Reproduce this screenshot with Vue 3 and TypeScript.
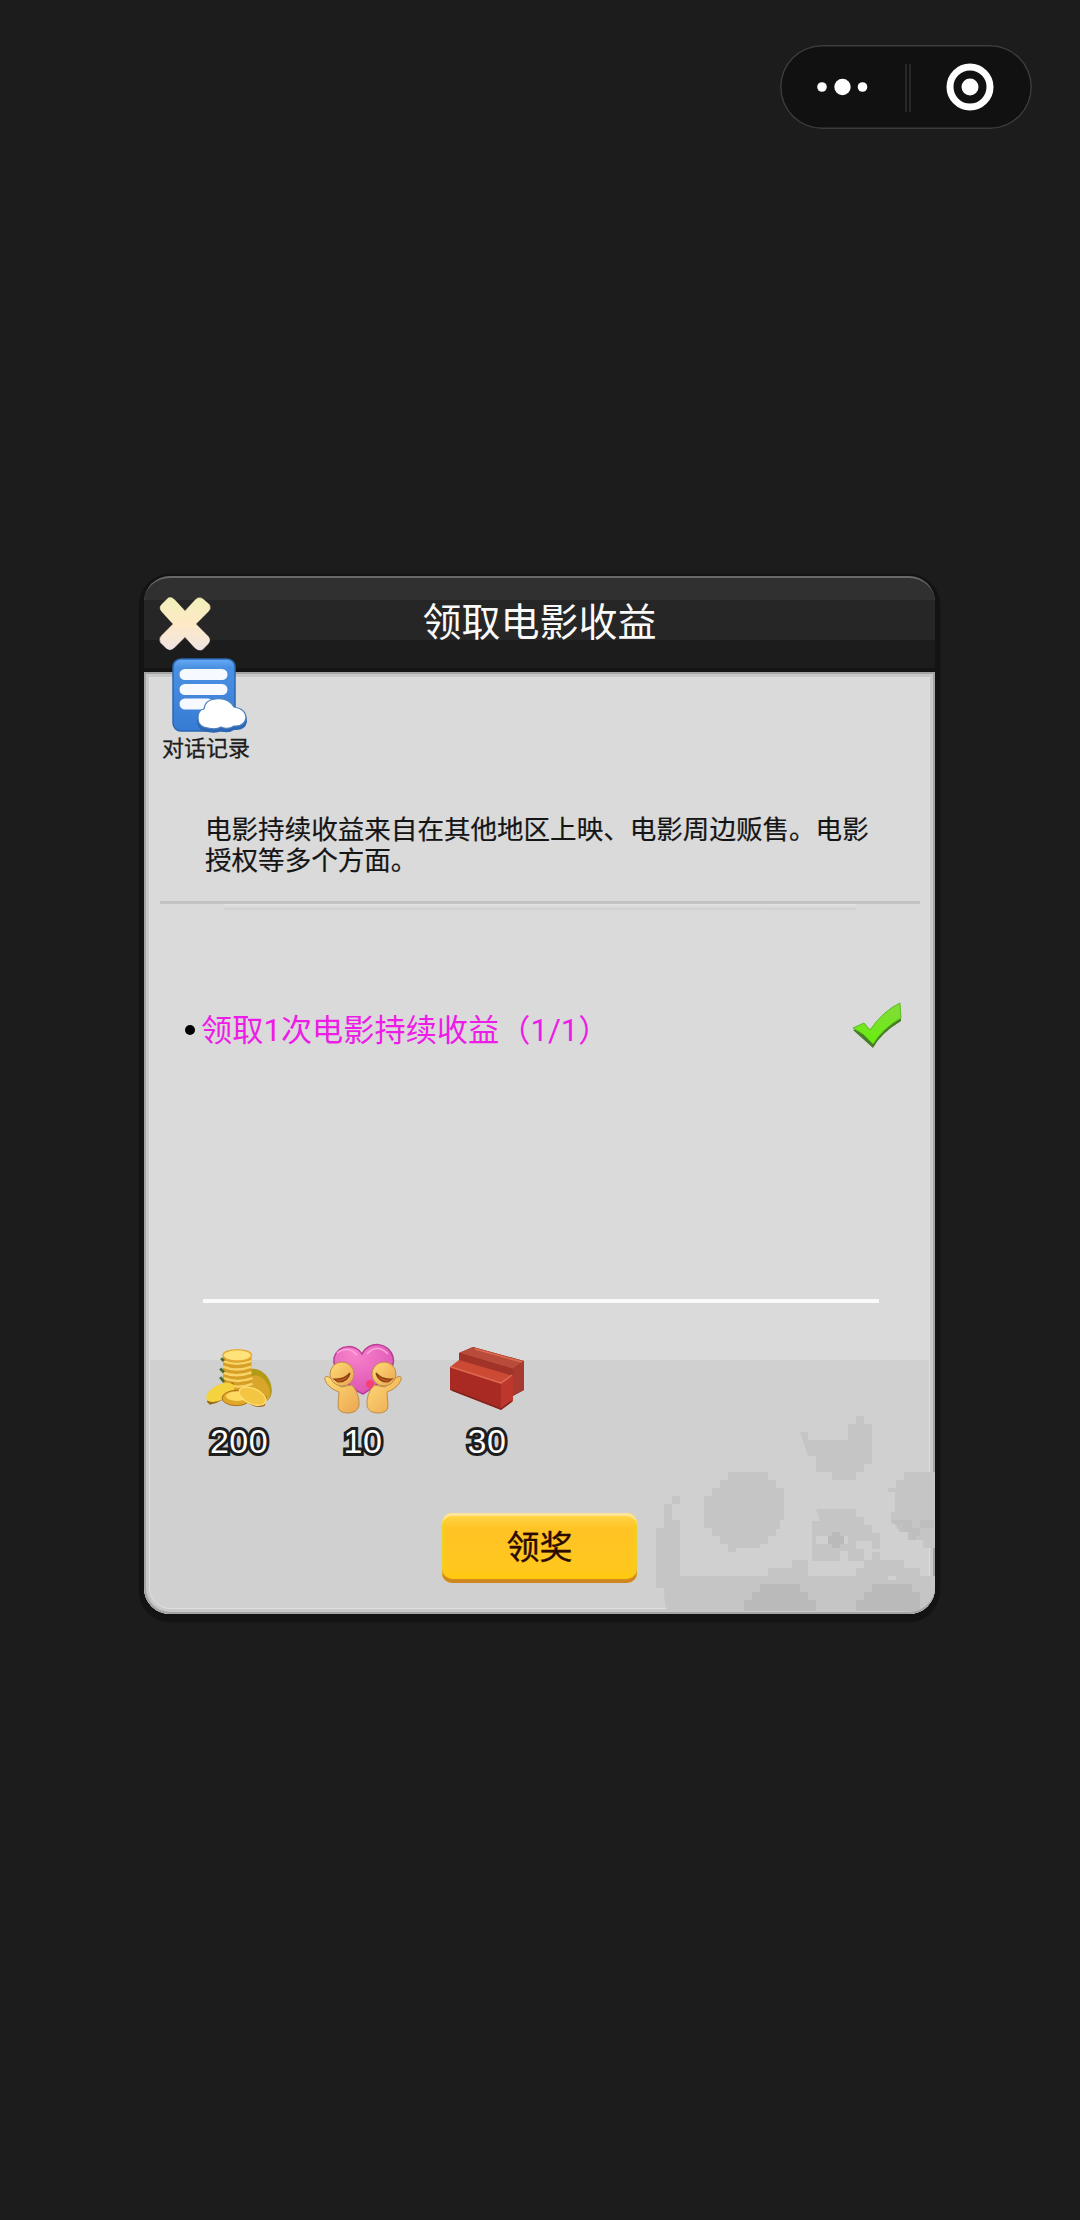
<script setup lang="ts">
interface Reward {
  kind: 'coins' | 'affection' | 'bricks'
  amount: number
}

const rewards: Reward[] = [
  { kind: 'coins', amount: 200 },
  { kind: 'affection', amount: 10 },
  { kind: 'bricks', amount: 30 },
]
</script>

<template>
  <main class="screen">
    <nav class="capsule-bar">
      <div class="capsule">
        <svg width="252" height="84" viewBox="0 0 252 84">
          <g fill="#fff">
            <circle cx="42" cy="42" r="4.8" />
            <circle cx="62.5" cy="42" r="8.2" />
            <circle cx="82.5" cy="42" r="4.8" />
            <circle cx="190" cy="42" r="8.5" />
          </g>
          <path d="M126 19V67M130 19V67" stroke="#303030" stroke-width="1.5" />
          <circle cx="190" cy="42" r="20" fill="none" stroke="#fff" stroke-width="7" />
        </svg>
      </div>
    </nav>

    <section class="dialog">
      <header class="head">
        <button class="close" aria-label="关闭">
          <svg width="58" height="60" viewBox="0 0 56 58">
            <defs>
              <linearGradient id="crossFill" x1="0" y1="0" x2="0" y2="1">
                <stop offset="0" stop-color="#f0f0b8" />
                <stop offset=".5" stop-color="#ffe9c6" />
                <stop offset="1" stop-color="#eee4e2" />
              </linearGradient>
            </defs>
            <path d="M12 4 Q15 3 18 6L28 17L38 6Q41 3 45 5L52 11Q54 15 51 18L39 30L51 42Q54 46 50 50L45 55Q41 57 37 53L28 43L18 53Q14 57 10 54L4 48Q2 44 5 41L16 30L5 18Q2 14 5 11Z" fill="url(#crossFill)" stroke="#15101c" stroke-opacity=".5" stroke-width=".8" />
          </svg>
        </button>
        <h1>领取电影收益</h1>
        <span class="balance"></span>
      </header>

      <div class="body">
        <svg class="reel" width="279" height="199" viewBox="0 0 279 199">
          <g fill="#c5c5c5">
            <path d="M72 60h40v8h8v8h8v32h-4v9h-4v7h-8v8h-8v4h-24v4h-8v-8h-8v-8h-8v-8h-8v-32h8v-8h8v-8h8z" />
            <path d="M144 20h8v8h40v-16h8v-8h8v8h8v40h-8v8h-8v8h-24v-8h-16v-16h-8z" />
            <path d="M248 60h31v76h-12v-8h-12v-8h-8v-8h-12v-12h4v-20h-7v-4h8v-8h8z" />
            <path d="M160 97h40v8h8v8h8v8h8v16h-8v-8h-16v8h8v12h-16v-10h-8v10h-28v-40h8z" />
            <path d="M16 84h8v8h-8v16h8v56h88v-8h24v-8h16v16h48v-8h8v-8h8v-8h8v8h24v8h16v8h15v37H12q-4-8-4-25H0V116h8V92h8z" />
          </g>
          <path d="M160 124h12v8h-12zM180 124h12v8h-12zM232 164h8v4h-8zM168 92h24v3h-24z" fill="#d0d0d0" />
          <g fill="#bababa">
            <path d="M104 172h40v8h8v8h8v14H88v-14h8v-8h8z" />
            <path d="M216 172h40v8h8v22h-64v-14h8v-8h8z" />
            <path d="M176 120h8v4h4v8h-4v4h-8v-4h-4v-8h4z" />
            <path d="M236 108h20v8h8v-8h14v8h-14v8h-4v4h-8v-8h-8z" opacity=".7" />
          </g>
        </svg>

        <button class="log">
          <svg width="72" height="78" viewBox="0 0 72 78">
            <defs>
              <linearGradient id="pageFill" x1="0" y1="0" x2="0" y2="1">
                <stop offset="0" stop-color="#68aaf5" />
                <stop offset=".12" stop-color="#4a90e2" />
                <stop offset="1" stop-color="#377bd4" />
              </linearGradient>
            </defs>
            <rect x="3" y="1" width="62" height="72" rx="8" fill="url(#pageFill)" stroke="#2a68b4" stroke-width="1.5" />
            <path d="M15 16.500H52M15 31.500H52M15 46H38" stroke="#f6f9ff" stroke-width="11" stroke-linecap="round" />
            <path d="M38 72Q27 71 27 61Q27 52 33 51Q34 42 45 41Q58 38 65 49Q77 50 77 62Q75 71 64 70Q58 74 51 71Q46 74 38 72Z" fill="#2b67b4" transform="translate(0 2)" />
            <path d="M38 70Q28 69 28 60Q28 52 34 51Q35 42 45 41Q58 39 64 49Q76 51 76 60Q74 69 64 68Q58 72 51 69Q46 72 38 70Z" fill="#fff" stroke="#4f82bd" stroke-width="1.200" />
          </svg>
          <span>对话记录</span>
        </button>

        <p class="description">电影持续收益来自在其他地区上映、电影周边贩售。电影授权等多个方面。</p>
        <div class="groove"><i></i></div>

        <div class="task">
          <span class="bullet"></span>
          <span class="task-name">领取1次电影持续收益（1/1）</span>
          <svg class="tick" width="54" height="52" viewBox="0 0 54 52">
            <defs>
              <linearGradient id="tickFill" x1="0" y1="0" x2="0" y2="1">
                <stop offset="0" stop-color="#86d83c" />
                <stop offset="1" stop-color="#66f00c" />
              </linearGradient>
            </defs>
            <path d="M3 30L23 48Q30 34 51 21V17Q32 27 22 40L7 29Z" fill="#477b24" />
            <path d="M3 28L14 23L20 30Q33 11 50 3L51 18Q33 28 23 44Q14 33 3 28Z" fill="url(#tickFill)" stroke="#58bd25" stroke-width="1" />
          </svg>
        </div>

        <div class="rule"></div>

        <ul class="rewards">
          <li v-for="reward in rewards" :key="reward.kind">
            <svg v-if="reward.kind === 'coins'" class="coins" width="76" height="72" viewBox="0 0 80 72">
              <ellipse cx="55" cy="42" rx="14" ry="19" transform="rotate(-30 55 42)" fill="#b19a18" />
              <ellipse cx="57" cy="45" rx="10" ry="15" transform="rotate(-30 57 45)" fill="#d8a62a" />
              <path d="M19 10V47Q34 57 49 48V10Z" fill="#d79f25" />
              <path d="M19 16Q33 22 49 16M19 22Q33 28 49 22M18 28Q33 34 49 28M20 34Q34 40 50 34M20 40Q34 46 50 40" fill="none" stroke="#f8d468" stroke-width="2.500" />
              <path d="M17 13L20 16M16 24L20 28M16 33L20 38" stroke="#496b32" stroke-width="3" />
              <ellipse cx="34" cy="10" rx="15" ry="6" fill="#ffe27a" stroke="#e5ac34" stroke-width="1.500" />
              <path d="M2 59Q10 38 30 39L29 47Q20 59 5 62Z" fill="#9b6a15" />
              <ellipse cx="16" cy="49" rx="16" ry="8" transform="rotate(-27 16 49)" fill="#f4d33f" />
              <ellipse cx="33" cy="55" rx="15" ry="8" fill="#e0a729" stroke="#a66d1b" stroke-width="1" />
              <ellipse cx="34" cy="53" rx="12" ry="5" fill="#ffda62" />
              <path d="M35 47Q53 44 65 54L63 63Q54 67 43 59Z" fill="#976518" />
              <ellipse cx="50" cy="53" rx="15" ry="8" transform="rotate(24 50 53)" fill="#f2c642" stroke="#ffdc71" stroke-width="1.500" />
            </svg>
            <svg v-else-if="reward.kind === 'affection'" width="80" height="72" viewBox="0 0 80 72">
              <defs>
                <radialGradient id="heartFill" cx=".35" cy=".2" r=".9">
                  <stop offset="0" stop-color="#f782cb" />
                  <stop offset="1" stop-color="#da4fb0" />
                </radialGradient>
                <linearGradient id="figureFill" x1="0" y1="0" x2="1" y2="1">
                  <stop offset="0" stop-color="#ffdc77" />
                  <stop offset="1" stop-color="#eba650" />
                </linearGradient>
              </defs>
              <path d="M40 50C26 44 9 26 11 14C15-1 34 0 39 10C46-4 66-2 70 13C74 27 53 42 40 50Z" fill="url(#heartFill)" stroke="#b93e95" stroke-width="1.500" />
              <path d="M14 9Q25 1 34 11M44 10Q54-1 65 10" fill="none" stroke="#ffa6dc" stroke-width="1.500" />
              <g fill="url(#figureFill)" stroke="#c08c48" stroke-width="1">
                <path d="M2 36Q1 31 6 33L18 43L29 41Q37 50 36 62Q34 69 25 69Q15 69 15 62L16 48Q5 44 2 36Z" />
                <path d="M78 36Q79 31 74 33L62 43L51 41Q43 50 44 62Q46 69 55 69Q65 69 65 62L64 48Q75 44 78 36Z" />
                <circle cx="19" cy="30" r="12" />
                <circle cx="61" cy="30" r="12" />
              </g>
              <path d="M11 35Q21 36 27 29Q25 38 15 38ZM69 35Q59 36 53 29Q55 38 65 38Z" fill="#c35a20" stroke="#874012" stroke-width="1.200" />
              <circle cx="47" cy="40" r="4" fill="#fb3558" opacity=".7" />
            </svg>
            <svg v-else width="80" height="72" viewBox="0 0 80 72">
              <path d="M12 9L26 3L77 17V46L66 52L12 34Z" fill="#84291f" />
              <path d="M12 9L26 3L77 17L66 25Z" fill="#b84b39" />
              <path d="M12 9L66 25V36L12 20Z" fill="#a23328" />
              <path d="M66 25L77 17V46L66 51Z" fill="#a8392e" />
              <path d="M3 23L12 16L66 32L54 42Z" fill="#cc4933" />
              <path d="M3 23L54 40V66L3 46Z" fill="#a92a22" />
              <path d="M54 40L66 31V57L54 66Z" fill="#bd372c" />
              <path d="M4 23L54 39L65 31M28 5L75 18" fill="none" stroke="#dc6a52" stroke-width="1.500" />
              <path d="M5 46L54 65L65 57" fill="none" stroke="#80241f" stroke-width="1.500" />
            </svg>
            <span>{{ reward.amount }}</span>
          </li>
        </ul>

        <button class="claim">领奖</button>
      </div>
    </section>
  </main>
</template>

<style>
body {
  margin: 0;
  background: #1c1c1c;
}
</style>

<style scoped>
.screen {
  display: flex;
  flex-direction: column;
  box-sizing: border-box;
  width: 1080px;
  height: 2220px;
  padding-top: 45px;
  overflow: hidden;
  background: #1c1c1c;
  font-family: Roboto, "Noto Sans CJK SC", sans-serif;
}

button {
  padding: 0;
  border: 0;
  background: none;
  font: inherit;
}

svg {
  display: block;
  flex: none;
  overflow: visible;
}

.capsule-bar {
  display: flex;
  justify-content: flex-end;
  padding-right: 48px;
}

.capsule {
  width: 252px;
  height: 84px;
  border-radius: 42px;
  background: #111;
  box-shadow: inset 0 0 0 1.5px #3c3c3c;
}

.dialog {
  display: flex;
  flex-direction: column;
  width: 791px;
  height: 1038px;
  margin: 447px 0 0 144px;
  border-radius: 26px;
  box-shadow: 0 3px 1px 5px #131313;
}

.head {
  display: flex;
  align-items: center;
  justify-content: space-between;
  box-sizing: border-box;
  height: 96px;
  padding: 0 12px;
  border-top: 2px solid #686868;
  border-bottom: 4px solid #141414;
  border-radius: 26px 26px 0 0;
  background: linear-gradient(#303030 22px, #262626 22px, #262626 62px, #1c1c1c 62px);
}

.close,
.balance {
  width: 58px;
  height: 60px;
}

h1 {
  margin: 0;
  color: #fafafa;
  font-size: 39px;
  font-weight: 400;
  line-height: 58px;
}

.body {
  position: relative;
  display: flex;
  flex: 1;
  flex-direction: column;
  border-radius: 0 0 26px 26px;
  background: linear-gradient(#dadada 688px, #d0d0d0 688px);
  box-shadow: inset 0 0 0 2px #a4a4a4, inset 0 0 0 5px #c8c8c8, inset 0 0 0 6px #dedede;
}

.reel {
  position: absolute;
  right: 0;
  bottom: 3px;
  overflow: hidden;
  border-bottom-right-radius: 24px;
}

.log {
  position: relative;
  display: flex;
  flex-direction: column;
  align-items: center;
  width: 90px;
  margin: -14px 0 0 17px;
  color: #1c1c1c;
  font-size: 22px;
  line-height: 28px;
  -webkit-text-stroke: 0.3px #1c1c1c;
}

.log svg {
  margin: 0 0 -1px;
}

.description {
  width: 670px;
  margin: 52px 0 0 61px;
  color: #151515;
  font-size: 26.55px;
  line-height: 30.600px;
  -webkit-text-stroke: 0.2px #151515;
}

.groove {
  height: 12px;
  margin: 25px 15px 0 16px;
  border-top: 3px solid #c2c2c2;
}

.groove i {
  display: block;
  height: 6px;
  margin: 0 64px;
  background: linear-gradient(#e2e2e2, #cfcfcf);
}

.task {
  display: flex;
  align-items: center;
  height: 60px;
  margin: 84px 31px 0 41px;
}

.tick {
  margin-top: -8px;
}

.bullet {
  width: 10px;
  height: 10px;
  margin-right: 6px;
  border-radius: 50%;
  background: #000;
}

.task-name {
  flex: 1;
  padding-top: 2px;
  color: #ed1ce6;
  font-size: 31.2px;
  line-height: 46px;
  white-space: nowrap;
}

.rule {
  height: 4px;
  margin: 239px 56px 0 59px;
  background: #fafafa;
}

.rewards {
  display: flex;
  gap: 44px;
  margin: 41px 0 0 55px;
  padding: 0;
  list-style: none;
}

.rewards li {
  display: flex;
  flex-direction: column;
  align-items: center;
  width: 80px;
}

.rewards .coins {
  margin-left: 8px;
}

.rewards span {
  margin-top: 3px;
  color: #fff;
  font-family: "Liberation Sans", sans-serif;
  font-size: 34px;
  line-height: 44px;
  letter-spacing: 0.5px;
  paint-order: stroke fill;
  -webkit-text-stroke: 6px #1d1d1d;
}

.claim {
  align-self: center;
  width: 195px;
  height: 70px;
  margin-top: 50px;
  border-radius: 10px;
  background: linear-gradient(#ffd84a, #ffc324 16px, #ffc71e 55px, #ffcb08);
  box-shadow: inset 0 3px 1px #ffe69a, inset 0 -4px 1px #cf8520, inset 3px 0 1px #f5d01b, inset -3px 0 1px #f5d01b;
  color: #2b0b00;
  font-size: 33px;
  line-height: 68px;
  -webkit-text-stroke: 0.4px #2b0b00;
}
</style>
